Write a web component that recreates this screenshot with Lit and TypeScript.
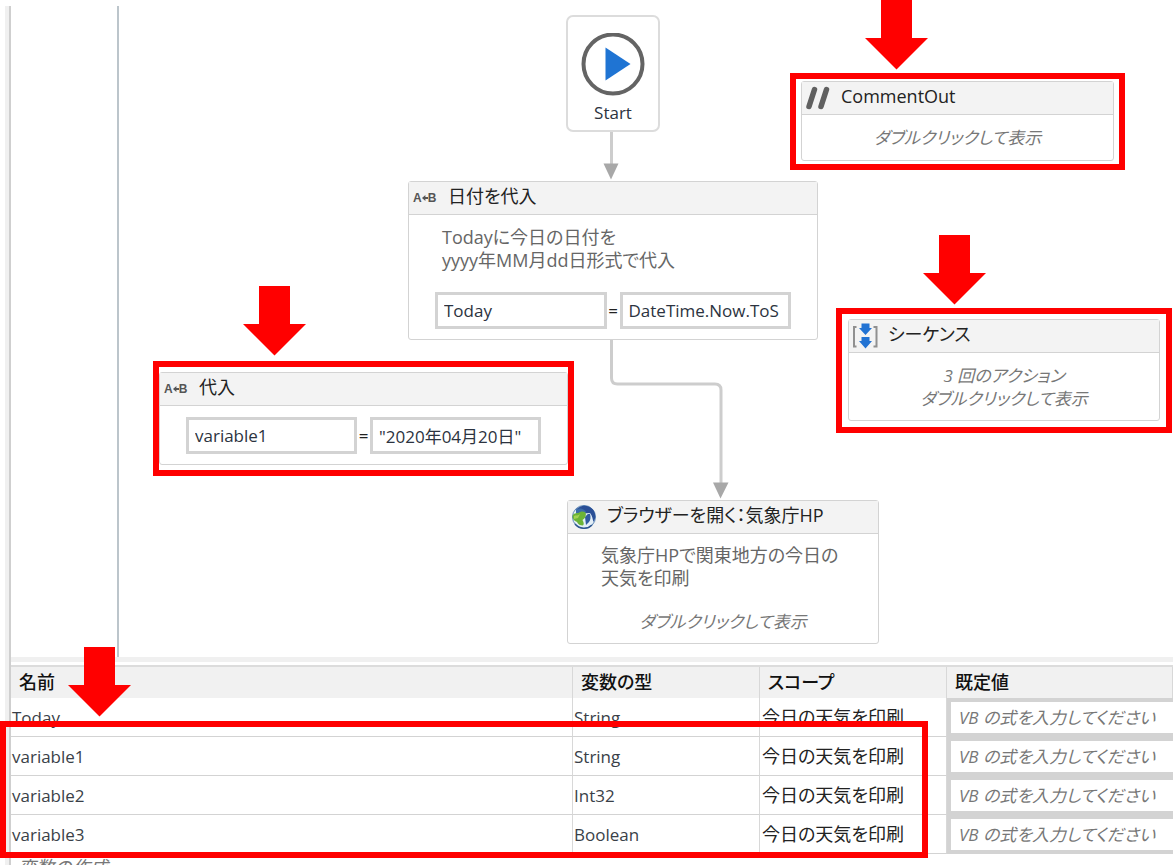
import { LitElement, html, css, svg } from "lit";
import { customElement, property } from "lit/decorators.js";

const assignIcon = html`<span class="ab" aria-hidden="true"
  >A<svg width="6" height="8" viewBox="0 0 6 8"><path d="M0 4 3.4 1v2H6v2H3.4v2z" fill="#555" /></svg>B</span
>`;

const commentIcon = html`<svg width="26" height="26" viewBox="0 0 26 26" aria-hidden="true">
  <g stroke="#606060" stroke-width="5.500" stroke-linecap="round">
    <path d="M4 21.500 9.500 4.500" />
    <path d="M16 21.500 21.500 4.500" />
  </g>
</svg>`;

const sequenceIcon = html`<svg width="26" height="26" viewBox="0 0 26 26" aria-hidden="true">
  <path d="M4.500 4H2V23.500H4.500M21.500 4H24.500V23.500H21.500" fill="none" stroke="#909090" stroke-width="2" />
  <path d="M9.500 0.500h8V5h2.500L13.500 12 7 5H9.500z" fill="#2273d3" />
  <path d="M9.500 14h8v4h2.500L13.500 25.500 7 18H9.500z" fill="#2273d3" />
</svg>`;

const globeIcon = html`<svg width="26" height="26" viewBox="0 0 26 26" aria-hidden="true">
  <circle cx="13" cy="13" r="11.500" fill="#e3eef6" stroke="#5b86b5" stroke-width="1" />
  <path d="M5 5.500C10 0 19 0.500 23 7c2 4 1.500 8-.5 11-1-3-1-6-3.500-9-3 0-5 1-7 0-2-1-4-2-7-3.500z" fill="#2a4f96" />
  <path d="M5 5.500c4-2 7-1 10 2l-2 3-8-1z" fill="#3b6ba8" />
  <path d="M14 13c2-3 4-4 5-3 1 3 .5 6-1 8l-3 3z" fill="#2f5ba0" />
  <path d="M1.500 12c1-3 4-3 6-3 2-2 5-2 7-.5 1 3 0 6-3 7.500 1 2 2 4 .5 5.500-3 0-5-1-6-3.500-3-1-4.500-3-4.500-6z" fill="#6cb436" />
  <path d="M3 12c2-1 4 0 6-2l-2 4-4 1z" fill="#a3d254" />
  <path d="M4 20c4 5 12 6 17 1" fill="none" stroke="#2d568f" stroke-width="1.500" />
</svg>`;

@customElement("activity-card")
class ActivityCard extends LitElement {
  @property() heading = "";
  @property({ attribute: false }) icon: unknown;
  @property({ attribute: false }) note: string[] = [];
  @property({ attribute: false }) fields: string[] = [];
  @property({ attribute: false }) hint: string[] = [];

  static styles = css`
    :host {
      display: flex;
      flex-direction: column;
      box-sizing: border-box;
      border: 1px solid #d3d3d3;
      border-radius: 3px;
      background: #fff;
      font-size: 18px;
      line-height: 23px;
      font-feature-settings: "palt";
    }
    .head {
      display: flex;
      align-items: center;
      gap: 10px;
      height: 32px;
      padding-left: 3px;
      border-bottom: 1px solid #d3d3d3;
      background: #f3f3f3;
      color: #222;
    }
    .icon {
      display: flex;
      width: 26px;
    }
    .ab {
      display: flex;
      align-items: center;
      padding-left: 1px;
      color: #555;
      font: bold 12px/20px "Liberation Sans", sans-serif;
    }
    .title {
      margin: 0 0 4px;
      font: inherit;
      white-space: nowrap;
    }
    .body {
      flex: 1;
      display: flex;
      flex-direction: column;
      justify-content: center;
      gap: 20px;
      color: #666;
    }
    .note {
      margin: 0;
      padding-left: 33px;
      white-space: nowrap;
    }
    .fields {
      display: flex;
      align-items: center;
      padding: 0 26px;
      color: #222;
    }
    .eq {
      width: 13px;
      text-align: center;
      font-size: 17px;
    }
    input {
      box-sizing: border-box;
      flex: 1;
      min-width: 0;
      height: 37px;
      padding: 0 6px;
      border: 3px solid #d3d3d3;
      border-radius: 0;
      background: #fff;
      color: #2c3340;
      font: inherit;
      font-size: 17px;
      outline: none;
    }
    .hint {
      margin: 0;
      text-align: center;
      font-size: 17px;
      font-style: italic;
      color: #777;
    }
  `;

  render() {
    return html`
      <div class="head">
        <span class="icon">${this.icon}</span>
        <h2 class="title">${this.heading}</h2>
      </div>
      <div class="body">
        ${this.note.length
          ? html`<p class="note">${this.note.map((t, i) => html`${i ? html`<br />` : ""}${t}`)}</p>`
          : ""}
        ${this.fields.length
          ? html`<div class="fields">
              <input aria-label="To" .value=${this.fields[0]} />
              <span class="eq">=</span>
              <input aria-label="Value" .value=${this.fields[1]} />
            </div>`
          : ""}
        ${this.hint.length
          ? html`<p class="hint">${this.hint.map((t, i) => html`${i ? html`<br />` : ""}${t}`)}</p>`
          : ""}
      </div>
    `;
  }
}

const pointer = svg`<path d="M16 0h31v38h16L31.500 69.500 0 38h16z" fill="#f00" />`;

@customElement("app-root")
class AppRoot extends LitElement {
  static styles = css`
    :host {
      position: relative;
      display: flex;
      box-sizing: border-box;
      height: 100vh;
      padding: 6px 0 0 5px;
      overflow: hidden;
      background: #fff;
      color: #222;
      font-family: "Open Sans", "Noto Sans CJK JP", sans-serif;
      font-size: 18px;
      line-height: 23px;
    }
    .rail {
      flex: none;
      width: 4px;
      border-right: 2px solid #cfcfcf;
      background: #f0f0f0;
    }
    .main {
      flex: 1;
      min-width: 0;
      display: flex;
      flex-direction: column;
    }
    .canvas {
      flex: 1;
      display: flex;
      min-height: 0;
    }
    .gutter {
      width: 106px;
      border-right: 2px solid #bcc5cb;
    }
    .links {
      position: absolute;
      top: 0;
      left: 0;
      pointer-events: none;
    }
    .node,
    .mark,
    .pointer {
      position: absolute;
    }
    .start {
      top: 15px;
      left: 566px;
      display: flex;
      flex-direction: column;
      align-items: center;
      box-sizing: border-box;
      width: 94px;
      height: 117px;
      padding-top: 16px;
      gap: 4px;
      border: 2px solid #dcdcdc;
      border-radius: 7px;
      background: #fff;
      font-size: 17px;
      color: #2c3340;
    }
    .date {
      top: 181px;
      left: 408px;
      width: 410px;
      height: 159px;
    }
    .assign {
      top: 372px;
      left: 159px;
      width: 409px;
      height: 93px;
    }
    .browser {
      top: 500px;
      left: 567px;
      width: 312px;
      height: 144px;
    }
    .comment {
      top: 81px;
      left: 801px;
      width: 313px;
      height: 80px;
    }
    .sequence {
      top: 319px;
      left: 848px;
      width: 312px;
      height: 102px;
    }
    .mark {
      box-sizing: border-box;
      border: 6px solid #f00;
      pointer-events: none;
    }
    .mark-comment {
      top: 73px;
      left: 790px;
      width: 335px;
      height: 97px;
    }
    .mark-sequence {
      top: 308px;
      left: 836px;
      width: 336px;
      height: 125px;
    }
    .mark-assign {
      top: 361px;
      left: 153px;
      width: 421px;
      height: 115px;
    }
    .mark-rows {
      top: 64px;
      left: -11px;
      width: 928px;
      height: 137px;
    }
    .pointer {
      width: 63px;
      height: 70px;
      pointer-events: none;
    }
    .p-comment {
      top: 0;
      left: 865px;
    }
    .p-sequence {
      top: 235px;
      left: 923px;
    }
    .p-assign {
      top: 286px;
      left: 243px;
    }
    .p-rows {
      top: -10px;
      left: 57px;
    }
    .panel {
      position: relative;
      flex: none;
      height: 208px;
    }
    .splitter {
      height: 5px;
      margin-bottom: 3px;
      background: #f0f0f0;
    }
    table {
      width: 100%;
      table-layout: fixed;
      border-collapse: separate;
      border-spacing: 0;
      border-top: 2px solid #dcdcdc;
    }
    .c-name {
      width: 562px;
    }
    .c-mid {
      width: 187px;
    }
    th {
      box-sizing: border-box;
      height: 31px;
      padding: 0 0 3px 8px;
      border-right: 1px solid #d8d8d8;
      background: #f1f1f1;
      text-align: left;
      font-weight: 500;
      font-family: "Noto Sans CJK JP", sans-serif;
      font-feature-settings: "palt";
      color: #111;
    }
    td {
      box-sizing: border-box;
      height: 39px;
      padding: 0 0 0 1px;
      border-right: 1px solid #d8d8d8;
      border-bottom: 1px solid #d3d3d3;
      white-space: nowrap;
    }
    .latin {
      font-size: 17px;
      color: #3a3f48;
    }
    .scope {
      padding-left: 2px;
      font-feature-settings: "palt";
    }
    td.value {
      padding: 0;
      border: 0;
    }
    .value input {
      display: block;
      box-sizing: border-box;
      width: 100%;
      height: 39px;
      padding: 0 0 0 8px;
      border: 4px solid #d3d3d3;
      border-right: 0;
      border-radius: 0;
      background: #fff;
      font: inherit;
      font-size: 17px;
      font-feature-settings: "palt";
      outline: none;
    }
    .value input::placeholder {
      color: #777;
      font-style: italic;
      opacity: 1;
    }
    .create {
      display: block;
      padding: 0 7px;
      border: 0;
      background: none;
      color: #777;
      font: inherit;
      font-style: italic;
      line-height: 27px;
    }
  `;

  private rows = [
    ["Today", "String"],
    ["variable1", "String"],
    ["variable2", "Int32"],
    ["variable3", "Boolean"],
  ];

  private pointerAt(place: string) {
    return html`<svg class="pointer ${place}" viewBox="0 0 63 70" aria-hidden="true">${pointer}</svg>`;
  }

  render() {
    return html`
      <div class="rail"></div>
      <div class="main">
        <div class="canvas">
          <div class="gutter"></div>
          <svg class="links" width="900" height="520" aria-hidden="true">
            <g fill="none" stroke="#cdcdcd" stroke-width="3">
              <path d="M611.500 131V165" />
              <path d="M611.500 339V378q0 6 6 6H715q6 0 6 6V484" />
            </g>
            <path d="M603.500 163.500h15L611 179.500z" fill="#a8a8a8" />
            <path d="M713 482.500h15.500L720.500 498.500z" fill="#a8a8a8" />
          </svg>
          <div class="node start">
            <svg width="64" height="64" viewBox="0 0 64 64" aria-hidden="true">
              <circle cx="32" cy="31" r="29.500" fill="#fff" stroke="#646464" stroke-width="4" />
              <path d="M24.500 14.500 49.500 31 24.500 47.500z" fill="#1f74d3" />
            </svg>
            <span>Start</span>
          </div>
          <activity-card
            class="node date"
            heading="日付を代入"
            .icon=${assignIcon}
            .note=${["Todayに今日の日付を", "yyyy年MM月dd日形式で代入"]}
            .fields=${["Today", "DateTime.Now.ToS"]}
          ></activity-card>
          <activity-card
            class="node assign"
            heading="代入"
            .icon=${assignIcon}
            .fields=${["variable1", '"2020年04月20日"']}
          ></activity-card>
          <activity-card
            class="node browser"
            heading="ブラウザーを開く：気象庁HP"
            .icon=${globeIcon}
            .note=${["気象庁HPで関東地方の今日の", "天気を印刷"]}
            .hint=${["ダブルクリックして表示"]}
          ></activity-card>
          <activity-card
            class="node comment"
            heading="CommentOut"
            .icon=${commentIcon}
            .hint=${["ダブルクリックして表示"]}
          ></activity-card>
          <activity-card
            class="node sequence"
            heading="シーケンス"
            .icon=${sequenceIcon}
            .hint=${["3 回のアクション", "ダブルクリックして表示"]}
          ></activity-card>
          <div class="mark mark-comment"></div>
          <div class="mark mark-sequence"></div>
          <div class="mark mark-assign"></div>
          ${this.pointerAt("p-comment")} ${this.pointerAt("p-sequence")} ${this.pointerAt("p-assign")}
        </div>
        <div class="panel">
          <div class="splitter"></div>
          <table>
            <colgroup>
              <col class="c-name" />
              <col class="c-mid" />
              <col class="c-mid" />
              <col />
            </colgroup>
            <thead>
              <tr>
                <th scope="col">名前</th>
                <th scope="col">変数の型</th>
                <th scope="col">スコープ</th>
                <th scope="col">既定値</th>
              </tr>
            </thead>
            <tbody>
              ${this.rows.map(
                ([name, type]) => html`<tr>
                  <td class="latin">${name}</td>
                  <td class="latin">${type}</td>
                  <td class="scope">今日の天気を印刷</td>
                  <td class="value">
                    <input aria-label="${name} 既定値" placeholder="VB の式を入力してください" />
                  </td>
                </tr>`
              )}
            </tbody>
          </table>
          <button class="create" type="button">変数の作成</button>
          <div class="mark mark-rows"></div>
          ${this.pointerAt("p-rows")}
        </div>
      </div>
    `;
  }
}
